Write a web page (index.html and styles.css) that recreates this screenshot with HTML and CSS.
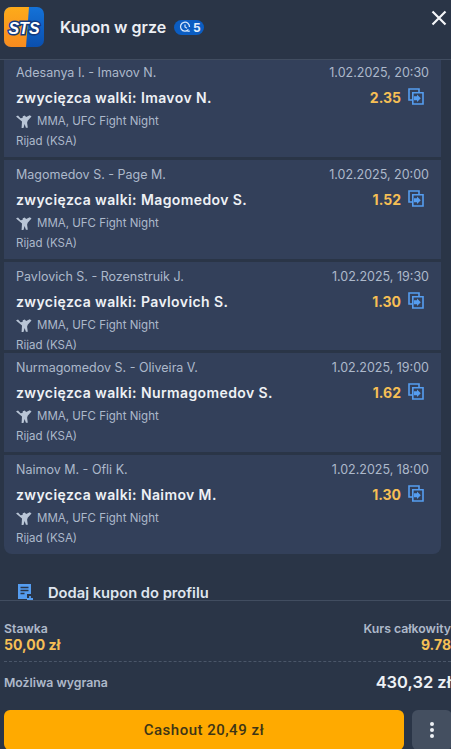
FILE: index.html
```html
<!DOCTYPE html>
<html lang="pl">
<head>
    <meta charset="UTF-8">
    <meta name="viewport" content="width=device-width, initial-scale=1.0">
    <title>Kupon w grze</title>
    <link rel="stylesheet" href="styles.css">
</head>
<body>
    <svg class="icon-defs" width="0" height="0">
        <symbol id="mma" viewBox="0 0 16 13">
            <path d="M0 1.500L2 .500l2.500 2.800 2-.3.300-1.800 2-.7 1.300 1.500L13.800.300 15.500 1.500l-3.800 4.300-.6 2 .7 5H9.900L8.600 9 7.500 13H5.600l.4-6.500z" fill="#b9c5d6"/>
        </symbol>
        <symbol id="copy" viewBox="0 0 16 17">
            <path d="M11 4.800V1H1v11h3.800" fill="none" stroke="#559df0" stroke-width="1.600"/>
            <path d="M4.800 4.800H15V16H4.800z" fill="none" stroke="#559df0" stroke-width="1.600"/>
            <path d="M6 8.300h3V6.500l3.800 3.800L9 14v-1.800H6z" fill="#559df0"/>
        </symbol>
    </svg>

    <div class="page">
        <header class="top">
            <svg class="logo" viewBox="0 0 40 40" width="40" height="40">
                <defs>
                    <linearGradient id="orange" x1="0" y1="0" x2="0" y2="1">
                        <stop offset="0" stop-color="#fdab1a"/>
                        <stop offset="1" stop-color="#f78b1f"/>
                    </linearGradient>
                    <linearGradient id="blue" x1="0" y1="0" x2="0" y2="1">
                        <stop offset="0" stop-color="#1472d8"/>
                        <stop offset="1" stop-color="#0a4fae"/>
                    </linearGradient>
                </defs>
                <rect width="40" height="40" rx="7" fill="url(#blue)"/>
                <path d="M7 0h18l-3 40H7a7 7 0 0 1-7-7V7a7 7 0 0 1 7-7z" fill="url(#orange)"/>
                <text x="20" y="26.500" text-anchor="middle" class="logo-text" stroke="#123a80" stroke-width="3" paint-order="stroke">STS</text>
            </svg>
            <h1>Kupon w grze</h1>
            <span class="badge">
                <svg viewBox="0 0 12 12" width="12" height="12">
                    <path d="M9.500 8.500A4.500 4.500 0 1 1 10.500 6" fill="none" stroke="#d4e6fb" stroke-width="1.300"/>
                    <path d="M6 3.500V6l2 1.200M8.500 10.500l2.500-.5" fill="none" stroke="#d4e6fb" stroke-width="1.200"/>
                </svg>
                5
            </span>
            <button class="close" aria-label="Zamknij">
                <svg viewBox="0 0 16 16" width="16" height="16">
                    <path d="M1.500 1.500l13 13M14.500 1.500l-13 13" stroke="#f4f6f9" stroke-width="2.200"/>
                </svg>
            </button>
        </header>

        <main class="scroll">
            <div class="bets">
                <div class="bet first">
                    <div class="bet-line">
                        <span>Adesanya I. - Imavov N.</span>
                        <span>1.02.2025, 20:30</span>
                    </div>
                    <div class="bet-pick">
                        <span class="pick">zwycięzca walki: Imavov N.</span>
                        <span class="odds">2.35</span>
                        <svg class="copy"><use href="#copy"/></svg>
                    </div>
                    <div class="bet-league"><svg class="mma"><use href="#mma"/></svg>MMA, UFC Fight Night</div>
                    <div class="bet-place">Rijad (KSA)</div>
                </div>
                <div class="bet">
                    <div class="bet-line">
                        <span>Magomedov S. - Page M.</span>
                        <span>1.02.2025, 20:00</span>
                    </div>
                    <div class="bet-pick">
                        <span class="pick">zwycięzca walki: Magomedov S.</span>
                        <span class="odds">1.52</span>
                        <svg class="copy"><use href="#copy"/></svg>
                    </div>
                    <div class="bet-league"><svg class="mma"><use href="#mma"/></svg>MMA, UFC Fight Night</div>
                    <div class="bet-place">Rijad (KSA)</div>
                </div>
                <div class="bet short">
                    <div class="bet-line">
                        <span>Pavlovich S. - Rozenstruik J.</span>
                        <span>1.02.2025, 19:30</span>
                    </div>
                    <div class="bet-pick">
                        <span class="pick">zwycięzca walki: Pavlovich S.</span>
                        <span class="odds">1.30</span>
                        <svg class="copy"><use href="#copy"/></svg>
                    </div>
                    <div class="bet-league"><svg class="mma"><use href="#mma"/></svg>MMA, UFC Fight Night</div>
                    <div class="bet-place">Rijad (KSA)</div>
                </div>
                <div class="bet">
                    <div class="bet-line">
                        <span>Nurmagomedov S. - Oliveira V.</span>
                        <span>1.02.2025, 19:00</span>
                    </div>
                    <div class="bet-pick">
                        <span class="pick">zwycięzca walki: Nurmagomedov S.</span>
                        <span class="odds">1.62</span>
                        <svg class="copy"><use href="#copy"/></svg>
                    </div>
                    <div class="bet-league"><svg class="mma"><use href="#mma"/></svg>MMA, UFC Fight Night</div>
                    <div class="bet-place">Rijad (KSA)</div>
                </div>
                <div class="bet">
                    <div class="bet-line">
                        <span>Naimov M. - Ofli K.</span>
                        <span>1.02.2025, 18:00</span>
                    </div>
                    <div class="bet-pick">
                        <span class="pick">zwycięzca walki: Naimov M.</span>
                        <span class="odds">1.30</span>
                        <svg class="copy"><use href="#copy"/></svg>
                    </div>
                    <div class="bet-league"><svg class="mma"><use href="#mma"/></svg>MMA, UFC Fight Night</div>
                    <div class="bet-place">Rijad (KSA)</div>
                </div>
            </div>
            <div class="add-row">
                <svg viewBox="0 0 16 20" width="16" height="20">
                    <path d="M1 1h13v10h-4v5H1z" fill="#559df0"/>
                    <path d="M3.500 4.500h8M3.500 7.500h8M3.500 10.500h4" stroke="#2a3547" stroke-width="1.300"/>
                    <path d="M13 13v6M10 16h6" stroke="#559df0" stroke-width="1.800"/>
                </svg>
                <span>Dodaj kupon do profilu</span>
            </div>
        </main>

        <footer class="bottom">
            <div class="sum-row">
                <div>
                    <div class="label">Stawka</div>
                    <div class="amount">50,00 zł</div>
                </div>
                <div class="right">
                    <div class="label">Kurs całkowity</div>
                    <div class="amount">9.78</div>
                </div>
            </div>
            <div class="win-row">
                <div class="label">Możliwa wygrana</div>
                <div class="win">430,32 zł</div>
            </div>
            <div class="actions">
                <button class="cashout">Cashout 20,49 zł</button>
                <button class="more" aria-label="Więcej"><i></i><i></i><i></i></button>
            </div>
        </footer>
    </div>
</body>
</html>
```

FILE: styles.css
```css
body {
    margin: 0;
    background-color: #2a3547;
    font-family: Inter, "Liberation Sans", sans-serif;
    color: #f0f3f7;
    overflow: hidden;
}

.icon-defs {
    display: none;
}

.page {
    display: flex;
    flex-direction: column;
    height: 749px;
    overflow: hidden;
}

/* Header */
.top {
    display: flex;
    align-items: center;
    flex: none;
    height: 59px;
    padding: 0 4px;
    border-bottom: 1px solid #414d60;
    box-sizing: content-box;
}

.logo {
    flex: none;
    margin-top: -5px;
}

.logo-text {
    font-family: "Liberation Sans", sans-serif;
    font-size: 16px;
    font-weight: bold;
    font-style: italic;
    fill: #ffffff;
}

.top h1 {
    margin: -5px 0 0 16px;
    font-size: 16px;
    font-weight: 600;
    color: #eceff4;
}

.badge {
    display: flex;
    align-items: center;
    gap: 2px;
    height: 15px;
    margin: -5px 0 0 8px;
    padding: 0 3px 0 5px;
    border-radius: 8px;
    background-color: #0b5dc2;
    font-size: 12px;
    font-weight: 700;
    color: #e3eefc;
}

.close {
    margin: -20px 0 0 auto;
    padding: 0;
    border: none;
    background: none;
    cursor: pointer;
}

/* Bets list */
.scroll {
    flex: 1;
    min-height: 0;
    overflow: hidden;
}

.bets {
    display: flex;
    flex-direction: column;
    gap: 3px;
    margin: 0 10px 0 4px;
    border-radius: 0 0 8px 8px;
    overflow: hidden;
}

.bet {
    height: 99px;
    padding: 7px 12px 0;
    box-sizing: border-box;
    background-color: #33405a;
    overflow: hidden;
}

.bet.first {
    height: 97px;
    padding-top: 5px;
}

.bet.short {
    height: 88px;
}

.bet-line {
    display: flex;
    justify-content: space-between;
    height: 16px;
    font-size: 12.500px;
    line-height: 16px;
    color: #adb9cb;
}

.bet-pick {
    display: flex;
    align-items: center;
    height: 18px;
    margin-top: 7px;
}

.pick {
    flex: 1;
    font-size: 14px;
    font-weight: 600;
    color: #eef1f5;
    letter-spacing: 0.4px;
}

.odds {
    font-size: 14px;
    font-weight: 700;
    color: #f6bf55;
}

.copy {
    width: 16px;
    height: 17px;
    margin: -2px 5px 0 7px;
}

.bet-league {
    display: flex;
    align-items: center;
    height: 16px;
    margin-top: 7px;
    font-size: 11.500px;
    line-height: 16px;
    color: #adb9cb;
}

.mma {
    width: 16px;
    height: 13px;
    margin-right: 5px;
}

.bet-place {
    height: 16px;
    margin-top: 4px;
    font-size: 11.500px;
    line-height: 16px;
    color: #adb9cb;
}

.add-row {
    display: flex;
    align-items: center;
    gap: 15px;
    margin: 29px 0 0 17px;
    font-size: 14.700px;
    font-weight: 600;
    color: #dfe5ee;
}

/* Footer */
.bottom {
    flex: none;
    height: 148px;
    border-top: 1px solid #414d60;
    padding-left: 4px;
    overflow: hidden;
}

.sum-row {
    display: flex;
    justify-content: space-between;
    height: 61px;
    padding-top: 20px;
    box-sizing: border-box;
    border-bottom: 1px dashed #4a5669;
}

.right {
    text-align: right;
}

.label {
    font-size: 12.300px;
    font-weight: 600;
    line-height: 15px;
    color: #aeb9ca;
}

.amount {
    font-size: 14px;
    font-weight: 700;
    line-height: 18px;
    color: #f6bf55;
}

.win-row {
    display: flex;
    align-items: center;
    justify-content: space-between;
    height: 40px;
}

.win {
    font-size: 16.500px;
    font-weight: 600;
    color: #eef1f5;
}

.actions {
    display: flex;
    gap: 8px;
    margin-top: 8px;
}

.cashout {
    flex: none;
    width: 400px;
    height: 40px;
    border: none;
    border-radius: 6px;
    background-color: #ffaa00;
    font-family: Roboto, sans-serif;
    font-size: 15px;
    font-weight: 500;
    letter-spacing: 0.5px;
    color: #3d3517;
    cursor: pointer;
}

.more {
    display: flex;
    flex: none;
    flex-direction: column;
    align-items: center;
    justify-content: center;
    gap: 2px;
    width: 40px;
    height: 40px;
    padding: 0;
    border: none;
    border-radius: 6px;
    background-color: #444f60;
    cursor: pointer;
}

.more i {
    width: 4px;
    height: 4px;
    border-radius: 50%;
    background-color: #eef1f5;
}
```
